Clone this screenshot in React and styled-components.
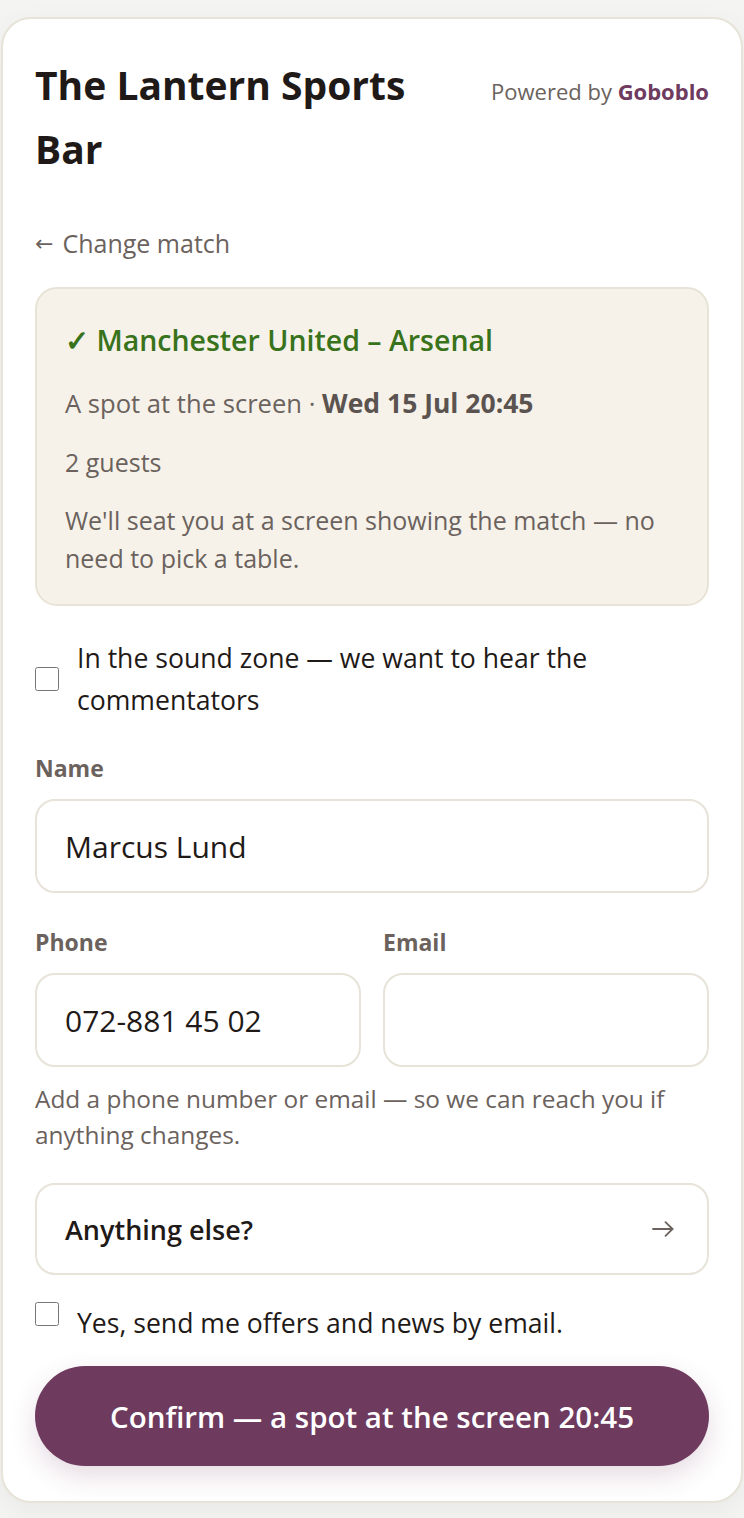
import React from "react";
import styled, { createGlobalStyle } from "styled-components";

const Global = createGlobalStyle`
  * { box-sizing: border-box; }
  html, body { margin: 0; padding: 0; background: #f4f4f3; }
  body { font-family: "Open Sans", "Noto Sans", sans-serif; color: #1f1a17; }
`;

const Page = styled.div`
  padding: 17px 1px 16px 1px;
`;

const Card = styled.main`
  background: #fff;
  border: 2px solid #e8e3d9;
  border-radius: 30px;
  padding: 34px 32px 35px 32px;
  box-shadow: 0 8px 28px rgba(0, 0, 0, 0.05);
  display: flex;
  flex-direction: column;
`;

const Header = styled.header`
  display: flex;
  align-items: baseline;
  justify-content: space-between;
  gap: 24px;
`;

const Title = styled.h1`
  margin: 0;
  font-size: 39px;
  font-weight: 700;
  line-height: 64px;
  color: #1f1a17;
  flex: 1;
  min-width: 0;
`;

const Powered = styled.div`
  font-size: 22px;
  color: #6b625d;
  white-space: nowrap;
  b { color: #6e3a5e; font-weight: 700; }
`;

const BackLink = styled.a`
  margin-top: 44px;
  font-size: 25px;
  line-height: 36px;
  color: #6b625d;
  text-decoration: none;
  align-self: flex-start;
  display: flex;
  align-items: center;
  gap: 9px;
`;

const BackArrow = styled.span`
  font-family: "DejaVu Sans", sans-serif;
  font-size: 22px;
  line-height: 1;
  margin-top: 2px;
`;

const Summary = styled.section`
  margin-top: 26px;
  background: #f6f2ea;
  border: 2px solid #e8e3d7;
  border-radius: 22px;
  padding: 31px 28px 27px 28px;
  display: flex;
  flex-direction: column;
  gap: 20px;
`;

const MatchTitle = styled.div`
  font-size: 28.5px;
  font-weight: 600;
  line-height: 40px;
  color: #38721a;
  margin-bottom: 4px;
`;

const SummaryLine = styled.div`
  font-size: 25px;
  line-height: 38px;
  color: #6b625d;
`;

const Strong = styled.b`
  font-weight: 700;
  color: #5b534f;
  font-size: 26.5px;
`;

const Lead = styled.span`
  font-size: 25.6px;
`;

const CheckRow = styled.label`
  margin-top: ${(p) => p.$mt}px;
  display: flex;
  align-items: ${(p) => (p.$top ? "flex-start" : "center")};
  gap: 18px;
  font-size: 26.6px;
  line-height: 42px;
  color: #1f1a17;
  cursor: pointer;
`;

const Check = styled.input.attrs({ type: "checkbox" })`
  width: 24px;
  height: 24px;
  margin: 0;
  flex: none;
  accent-color: #6e3a5e;
`;

const Field = styled.div`
  margin-top: ${(p) => p.$mt || 0}px;
  display: flex;
  flex-direction: column;
  gap: 16px;
  min-width: 0;
`;

const Label = styled.label`
  font-size: 23px;
  font-weight: 700;
  line-height: 30px;
  color: #6b625d;
`;

const Input = styled.input`
  width: 100%;
  height: 94px;
  border: 2px solid #e8e3d9;
  border-radius: 20px;
  background: #fff;
  padding: 0 28px;
  font-family: inherit;
  font-size: 30px;
  color: #1f1a17;
  outline: none;
`;

const TwoCol = styled.div`
  margin-top: 34px;
  display: grid;
  grid-template-columns: 1fr 1fr;
  gap: 22px;
`;

const Help = styled.p`
  margin: 14px 0 0 0;
  font-size: 24.4px;
  line-height: 36px;
  color: #6b625d;
`;

const MoreButton = styled.button`
  margin-top: 30px;
  height: 92px;
  width: 100%;
  border: 2px solid #e8e3d9;
  border-radius: 20px;
  background: #fff;
  padding: 0 33px 0 28px;
  display: flex;
  align-items: center;
  justify-content: space-between;
  font-family: inherit;
  font-size: 27px;
  font-weight: 600;
  color: #1f1a17;
  cursor: pointer;
`;

const Confirm = styled.button`
  margin-top: 22px;
  height: 100px;
  width: 100%;
  border: none;
  border-radius: 50px;
  background: #6e3a5e;
  color: #fff;
  font-family: inherit;
  font-size: 29.5px;
  font-weight: 600;
  box-shadow: 0 10px 26px rgba(110, 58, 94, 0.18);
  cursor: pointer;
`;

const Arrow = () => (
  <svg width="22" height="16" viewBox="0 0 22 16" fill="none" stroke="#6b625d" strokeWidth="1.8" strokeLinecap="round" strokeLinejoin="round">
    <path d="M1 8h19.5" />
    <path d="M13.5 1.2 20.5 8l-7 6.8" />
  </svg>
);

export default function App() {
  return (
    <>
      <Global />
      <Page>
        <Card>
          <Header>
            <Title>The Lantern Sports Bar</Title>
            <Powered>
              Powered by <b>Goboblo</b>
            </Powered>
          </Header>
          <BackLink href="#">
            <BackArrow>←</BackArrow>
            <span>Change match</span>
          </BackLink>
          <Summary>
            <MatchTitle>✓ Manchester United – Arsenal</MatchTitle>
            <SummaryLine>
              <Lead>A spot at the screen · </Lead>
              <Strong>Wed 15 Jul 20:45</Strong>
            </SummaryLine>
            <SummaryLine>2 guests</SummaryLine>
            <SummaryLine>
              We'll seat you at a screen showing the match — no need to pick a table.
            </SummaryLine>
          </Summary>
          <CheckRow $mt={31}>
            <Check />
            <span>In the sound zone — we want to hear the commentators</span>
          </CheckRow>
          <Field $mt={32}>
            <Label>Name</Label>
            <Input defaultValue="Marcus Lund" />
          </Field>
          <TwoCol>
            <Field>
              <Label>Phone</Label>
              <Input defaultValue="072-881 45 02" />
            </Field>
            <Field>
              <Label>Email</Label>
              <Input defaultValue="" />
            </Field>
          </TwoCol>
          <Help>Add a phone number or email — so we can reach you if anything changes.</Help>
          <MoreButton type="button">
            <span>Anything else?</span>
            <Arrow />
          </MoreButton>
          <CheckRow $mt={27} $top>
            <Check />
            <span>Yes, send me offers and news by email.</span>
          </CheckRow>
          <Confirm type="button">Confirm — a spot at the screen 20:45</Confirm>
        </Card>
      </Page>
    </>
  );
}
